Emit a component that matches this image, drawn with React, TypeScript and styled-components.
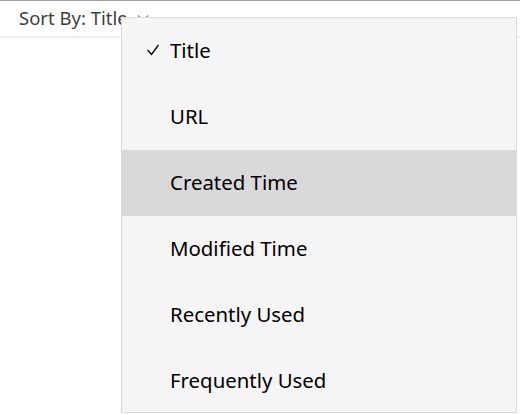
import styled, { createGlobalStyle } from "styled-components"

const GlobalStyle = createGlobalStyle`
    html, body {
        margin: 0;
        padding: 0;
        background: #ffffff;
        font-family: "Segoe UI", "Noto Sans", "Open Sans", sans-serif;
    }
`

const Page = styled.div`
    position: relative;
    width: 520px;
    height: 415px;
    overflow: hidden;
    background: #ffffff;
`

const Toolbar = styled.div`
    height: 35px;
    border-top: 1px solid #a0a0a0;
    border-bottom: 2px solid #efefef;
    display: flex;
    align-items: center;
    padding-left: 19px;
`

const SortLabel = styled.span`
    font-size: 18.5px;
    color: #404040;
    display: flex;
    align-items: center;
    gap: 9px;
    padding-bottom: 2px;
`

const Content = styled.div`
    padding: 374px 0 0 123px;
    font-size: 14px;
    font-weight: 700;
    color: #111;
`

const Menu = styled.ul`
    position: absolute;
    top: 17px;
    left: 121px;
    width: 396px;
    height: 396px;
    box-sizing: border-box;
    margin: 0;
    padding: 0;
    list-style: none;
    background: #f5f5f5;
    border: 1px solid #dadada;
    overflow: hidden;
`

const Item = styled.li<{ $active?: boolean }>`
    position: relative;
    height: 66px;
    box-sizing: border-box;
    display: flex;
    align-items: center;
    padding: 0 0 3px 48px;
    font-size: 20.4px;
    color: #000000;
    background: ${(p) => (p.$active ? "#d9d9d9" : "transparent")};
`

const Check = styled.svg`
    position: absolute;
    left: 24px;
    top: 26px;
`

const options = [
    "Title",
    "URL",
    "Created Time",
    "Modified Time",
    "Recently Used",
    "Frequently Used",
]

export default function App() {
    const selected = "Title"
    const hovered = "Created Time"
    return <Page>
        <GlobalStyle />
        <Toolbar>
            <SortLabel>
                Sort By: Title
                <svg width="12" height="8" viewBox="0 0 12 8">
                    <path d="M1 1.5 L6 6.5 L11 1.5" fill="none" stroke="#8a8a8a" strokeWidth="1.2" />
                </svg>
            </SortLabel>
        </Toolbar>
        <Content>Wi</Content>
        <Menu>
            {options.map((name) => (
                <Item key={name} $active={name === hovered}>
                    {name === selected && <Check width="14" height="12" viewBox="0 0 14 12">
                        <path d="M1.5 6 L5.5 10.5 L12.5 1" fill="none" stroke="#000" strokeWidth="1.3" />
                    </Check>}
                    {name}
                </Item>
            ))}
        </Menu>
    </Page>
}
